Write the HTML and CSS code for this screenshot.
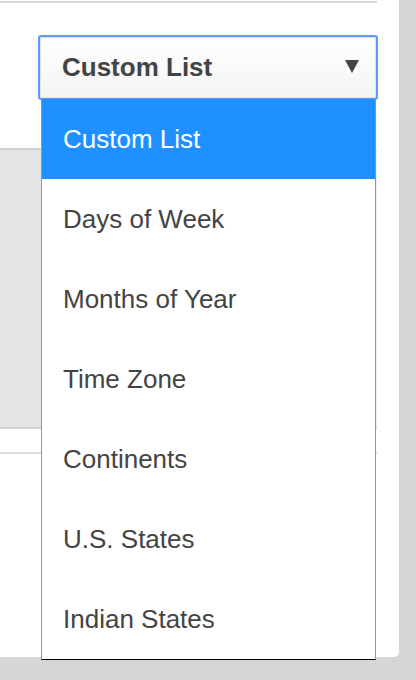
FILE: index.html
```html
<!DOCTYPE html>
<html lang="en">
<head>
<meta charset="utf-8">
<title>Custom List</title>
<link rel="stylesheet" href="styles.css">
</head>
<body>
<div class="card">
  <div class="rule-top"></div>
  <div class="select">
    <span class="select-label">Custom List</span>
    <svg class="select-arrow" width="14" height="13" viewBox="0 0 14 13" aria-hidden="true"><polygon points="0,0 14,0 7,13" fill="#444"/></svg>
  </div>
  <div class="panel"></div>
  <div class="rule-bottom"></div>
  <ul class="dropdown">
    <li class="option selected">Custom List</li>
    <li class="option">Days of Week</li>
    <li class="option">Months of Year</li>
    <li class="option">Time Zone</li>
    <li class="option">Continents</li>
    <li class="option">U.S. States</li>
    <li class="option">Indian States</li>
  </ul>
</div>
</body>
</html>
```
FILE: styles.css
```css
html, body {
  margin: 0;
  padding: 0;
}
body {
  background: #d6d6d6;
  font-family: "Liberation Sans", Arial, sans-serif;
  width: 416px;
  height: 680px;
  overflow: hidden;
}
.card {
  position: relative;
  width: 399px;
  height: 657px;
  background: #ffffff;
  border-bottom-right-radius: 5px;
  display: flex;
  flex-direction: column;
}
.rule-top {
  margin-top: 1px;
  width: 377px;
  height: 2px;
  background: #d6d9dd;
}
.select {
  box-sizing: border-box;
  margin-top: 32px;
  margin-left: 38px;
  width: 340px;
  height: 65px;
  border: 2px solid #6198f6;
  border-radius: 3px;
  box-shadow: inset 0 0 0 1px #e2e2e2;
  background: linear-gradient(#ffffff, #f3f4f4);
  display: flex;
  align-items: center;
  justify-content: space-between;
  padding: 0 17px 0 22px;
}
.select-label {
  font-size: 26px;
  font-weight: bold;
  color: #444444;
}
.select-arrow {
  display: block;
  margin-top: -3px;
}
.panel {
  box-sizing: border-box;
  margin-top: 48px;
  width: 377px;
  height: 281px;
  background: #e3e4e5;
  border-top: 2px solid #cfd2d5;
  border-bottom: 2px solid #d3d6d9;
  border-right: 1px solid #eceeef;
}
.rule-bottom {
  margin-top: 23px;
  width: 377px;
  height: 2px;
  background: #dadcdf;
}
.dropdown {
  position: absolute;
  left: 41px;
  top: 99px;
  box-sizing: border-box;
  width: 335px;
  margin: 0;
  padding: 0;
  list-style: none;
  background: #ffffff;
  border-left: 1px solid #7a98cc;
  border-right: 1px solid #7a98cc;
  border-bottom: 1px solid #000000;
}
.option {
  height: 80px;
  line-height: 80px;
  padding-left: 21px;
  font-size: 26px;
  color: #444444;
  white-space: nowrap;
}
.option.selected {
  background: #1e90ff;
  color: #ffffff;
}
```
